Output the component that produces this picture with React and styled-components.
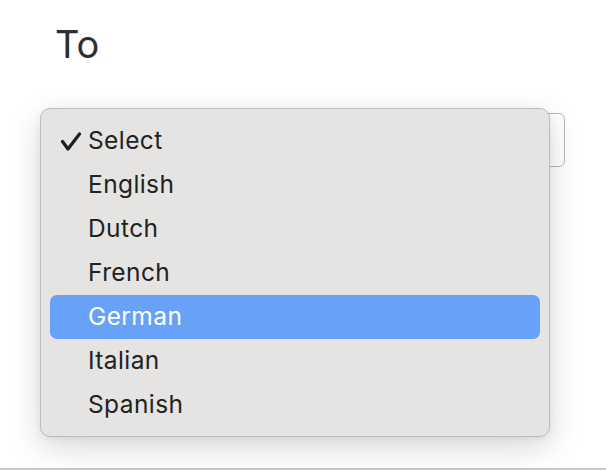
import React from "react";
import styled, { createGlobalStyle } from "styled-components";

const GlobalStyle = createGlobalStyle`
  html, body {
    margin: 0;
    padding: 0;
    background: #ffffff;
  }
  body {
    font-family: Inter, "Noto Sans", "Liberation Sans", sans-serif;
    -webkit-font-smoothing: antialiased;
  }
`;

const Page = styled.div`
  box-sizing: border-box;
  min-height: 470px;
  padding: 25px 41px 0 55px;
  border-bottom: 2px solid #c9c9c9;
`;

const Label = styled.h2`
  margin: 0;
  font-size: 38px;
  line-height: 38px;
  font-weight: 400;
  color: #2f2f2f;
`;

const Field = styled.div`
  position: relative;
  margin-top: 50px;
  width: 510px;
`;

const SelectBox = styled.div`
  box-sizing: border-box;
  height: 54px;
  border: 1px solid #b9b9b9;
  border-radius: 6px;
  background: #ffffff;
`;

const Menu = styled.ul`
  position: absolute;
  top: -5px;
  left: -15px;
  box-sizing: border-box;
  width: 510px;
  margin: 0;
  padding: 10px 9px 9px;
  list-style: none;
  background: #e5e4e2;
  border: 1px solid #bdbcbb;
  border-radius: 10px;
  box-shadow: 0 10px 32px rgba(0, 0, 0, 0.16), 0 2px 6px rgba(0, 0, 0, 0.06);
`;

const Option = styled.li`
  position: relative;
  display: flex;
  align-items: center;
  height: 44px;
  padding: 0 0 1px 38px;
  box-sizing: border-box;
  border-radius: 7px;
  font-size: 24.5px;
  letter-spacing: 0.4px;
  line-height: 1;
  color: ${(p) => (p.$active ? "#ffffff" : "#222222")};
  background: ${(p) => (p.$active ? "#68a2f8" : "transparent")};
`;

const Check = styled.svg`
  position: absolute;
  left: 10px;
  top: 13px;
  width: 22px;
  height: 20px;
`;

const CheckMark = () => (
  <Check viewBox="0 0 22 20" fill="none">
    <path
      d="M2.5 9.5 L8 17 L19.5 2"
      stroke="#1e1e1e"
      strokeWidth="3.2"
      strokeLinecap="round"
      strokeLinejoin="round"
    />
  </Check>
);

const options = ["Select", "English", "Dutch", "French", "German", "Italian", "Spanish"];

export default function App() {
  const selected = "Select";
  const hovered = "German";

  return (
    <Page>
      <GlobalStyle />
      <Label>To</Label>
      <Field>
        <SelectBox />
        <Menu>
          {options.map((name) => (
            <Option key={name} $active={name === hovered}>
              {name === selected && <CheckMark />}
              {name}
            </Option>
          ))}
        </Menu>
      </Field>
    </Page>
  );
}
